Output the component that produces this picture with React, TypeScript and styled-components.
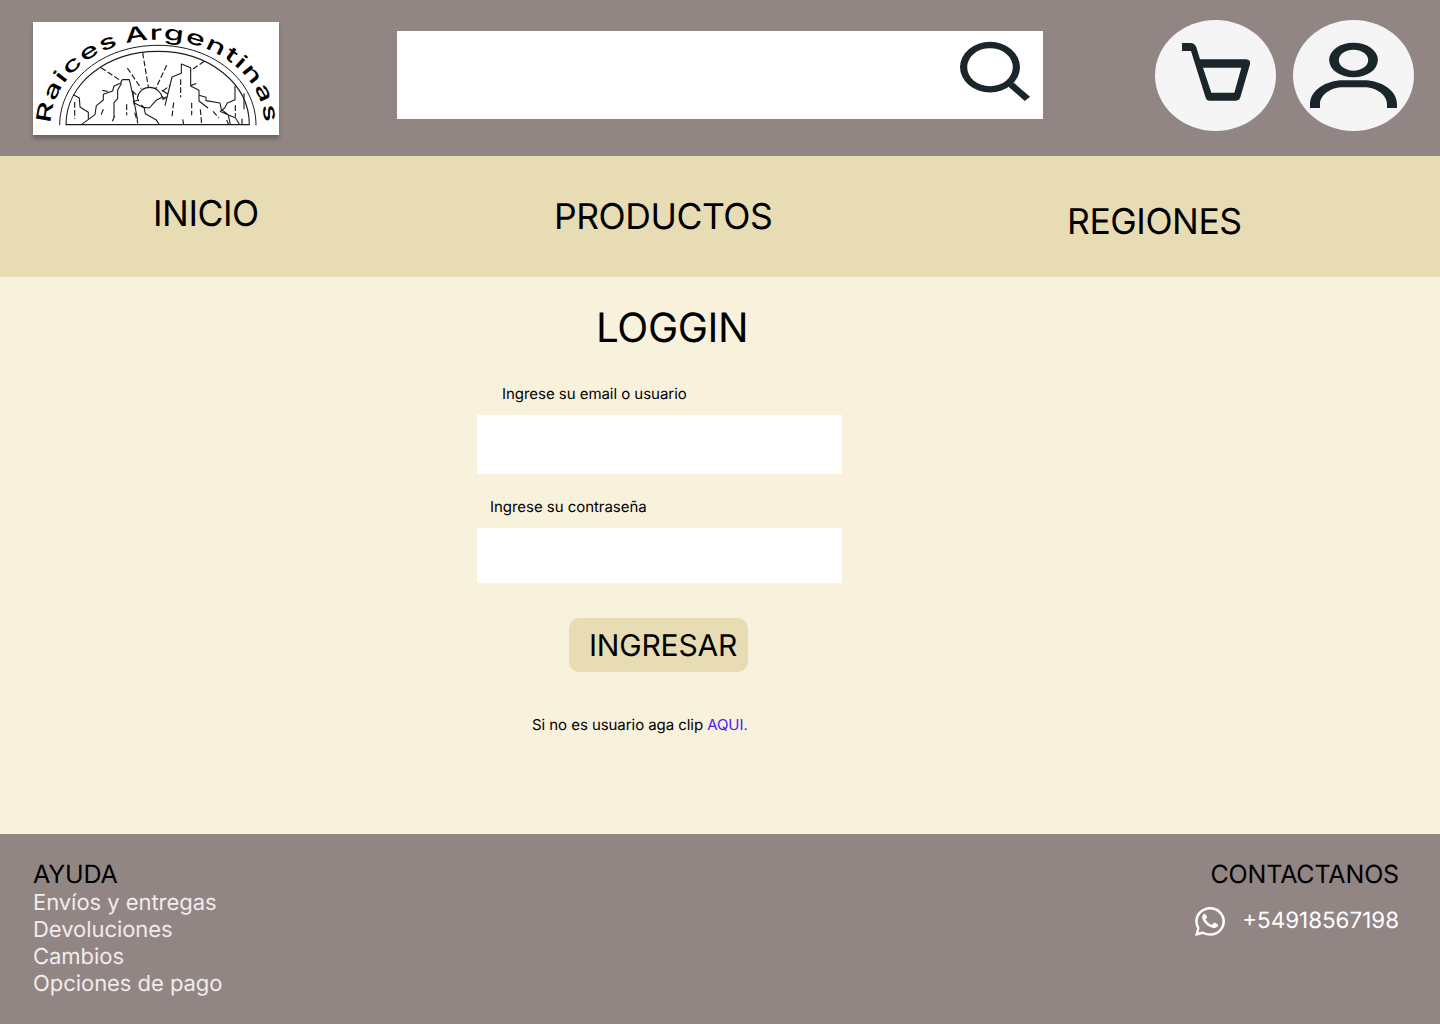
import React from "react";
import styled, { createGlobalStyle } from "styled-components";

const GlobalStyle = createGlobalStyle`
  *, *::before, *::after { box-sizing: border-box; }
  body { margin: 0; background: #f8f1dc; font-family: Inter, "Liberation Sans", sans-serif; text-rendering: geometricPrecision; color: #000; }
`;

const Page = styled.div`
  display: flex;
  flex-direction: column;
  width: 1440px;
  height: 1024px;
  overflow: hidden;
`;

const Header = styled.header`
  display: flex;
  align-items: flex-start;
  height: 156px;
  padding: 20px 26px 0 33px;
  background: #928685;
`;

const LogoCard = styled.a`
  display: block;
  width: 246px;
  height: 113px;
  margin-top: 2px;
  background: #fff;
  box-shadow: 0 4px 4px rgba(0, 0, 0, 0.25);
  svg { display: block; overflow: visible; }
`;

const SearchBar = styled.form`
  display: flex;
  width: 646px;
  height: 88px;
  margin: 11px 0 0 118px;
  background: #fff;
`;

const SearchInput = styled.input`
  flex: 1;
  min-width: 0;
  padding: 0 20px;
  border: 0;
  outline: 0;
  background: transparent;
  font: 400 28px Inter, sans-serif;
`;

const SearchButton = styled.button`
  width: 103px;
  padding: 0;
  border: 0;
  background: transparent;
  svg { display: block; }
`;

const Actions = styled.div`
  display: flex;
  gap: 17px;
  margin-left: auto;
`;

const RoundButton = styled.button`
  width: 121px;
  height: 111px;
  padding: 0;
  border: 0;
  border-radius: 50%;
  background: #f5f5f5;
  svg { display: block; }
`;

const Nav = styled.nav`
  display: flex;
  align-items: flex-start;
  height: 121px;
  background: #e8dcb4;
`;

const NavLink = styled.a<{ $left: number; $top: number; $width: number }>`
  width: ${(p) => p.$width}px;
  margin: ${(p) => p.$top}px 0 0 ${(p) => p.$left}px;
  font-size: 35.5px;
  letter-spacing: -0.45px;
  line-height: 42px;
  white-space: nowrap;
`;

const Main = styled.main`
  height: 557px;
  padding: 27px 0 0 477px;
  background: #f8f1dc;
`;

const LoginForm = styled.form`
  display: flex;
  flex-direction: column;
  align-items: flex-start;
  width: 365px;
`;

const Title = styled.h1`
  margin: 0 0 33px 119px;
  font-size: 40.5px;
  font-weight: 400;
  line-height: 48px;
  letter-spacing: -0.4px;
`;

const Label = styled.label<{ $indent: number }>`
  height: 18px;
  margin: 0 0 12px ${(p) => p.$indent}px;
  font-size: 15px;
  letter-spacing: -0.04px;
  line-height: 18px;
  white-space: nowrap;
`;

const Field = styled.input<{ $height: number; $after: number }>`
  width: 365px;
  height: ${(p) => p.$height}px;
  margin: 0 0 ${(p) => p.$after}px;
  padding: 0 16px;
  border: 0;
  border-radius: 0;
  background: #fff;
  font: 400 18px Inter, sans-serif;
`;

const Submit = styled.button`
  width: 179px;
  height: 54px;
  margin-left: 92px;
  padding: 2px 0 0 20px;
  border: 0;
  border-radius: 10px;
  background: #e8dcb4;
  color: #000;
  font: 400 30px/36px Inter, sans-serif;
  letter-spacing: -0.2px;
  text-align: left;
  text-rendering: geometricPrecision;
  white-space: nowrap;
`;

const Hint = styled.p`
  margin: 44px 0 0 55px;
  font-size: 15px;
  letter-spacing: -0.06px;
  line-height: 18px;
  white-space: nowrap;
`;

const HintLink = styled.a`
  color: #4a22f4;
`;

const Footer = styled.footer`
  display: flex;
  justify-content: space-between;
  height: 190px;
  padding: 25px 41px 0 33px;
  background: #928685;
`;

const FooterColumn = styled.section<{ $end?: boolean }>`
  display: flex;
  flex-direction: column;
  align-items: ${(p) => (p.$end ? "flex-end" : "flex-start")};
`;

const FooterTitle = styled.h2`
  margin: 0 0 -1px;
  font-size: 25px;
  font-weight: 400;
  letter-spacing: -0.15px;
  line-height: 32px;
`;

const FooterLink = styled.a`
  color: #f0ecec;
  font-size: 22px;
  letter-spacing: -0.05px;
  line-height: 27px;
`;

const Phone = styled.a`
  display: flex;
  align-items: center;
  gap: 17px;
  margin-top: 16px;
  color: #fff;
  font-size: 22.4px;
  line-height: 30px;
`;

const Logo = () => (
  <svg width="246" height="113" viewBox="0 0 738 339" fill="none" stroke="#1c1c1c" strokeWidth="3.300" strokeLinejoin="round">
    <defs>
      <path id="logo-arc" d="M54 306A320 253 0 0 1 694 306V325" />
    </defs>
    <text fontFamily="Inter, sans-serif" fontSize="61" fontWeight="500" letterSpacing="3" wordSpacing="-7" fill="#000" stroke="none">
      <textPath href="#logo-arc" startOffset="1" textLength="902" lengthAdjust="spacingAndGlyphs">Raices Argentinas</textPath>
    </text>
    <path d="M80 310C80 176 208 70 375 70S669 176 669 310" strokeWidth="3" />
    <path d="M99 308C99 186 220 88 375 88S649 186 649 308Z" />
    <path d="M121 218L139 228L141 255L166 271V290M145 308L186 278L190 251L211 234V217L239 207L243 192L262 184L268 173H289L299 216L314 296" />
    <path d="M243 285V242L254 230V204L266 184M297 207L310 218M300 239L316 234M304 243L333 257M313 229C315 210 331 196 350 196S384 209 389 229M313 229L318 238M391 224L372 233L363 242L349 258L333 256L325 249M333 256L337 275L369 293L379 308" />
    <path d="M300 208L303 248M386 205L403 215M389 229L402 224M387 232L398 230M396 251L417 165L445 154V126L473 137V192L498 205V220L519 226V236L561 243L565 262L586 279L592 308M498 205V237L525 258M561 268L575 258L583 243L606 233V192M561 268L586 279L607 287L620 308" />
    <path d="M633 214V262" />
    <g strokeDasharray="17 7" strokeWidth="3.500">
      <path d="M329 92L346 195M204 137L266 178M283 138L325 200M401 130L368 200M514 118L472 146M208 205L232 210M389 207L412 190M474 190L495 183" />
      <path d="M125 240V290M211 262L203 282M245 282L236 302M281 247V280M305 272L315 304M443 172V226M422 242L417 285M476 242V280M449 292L452 308M502 262L506 308M540 268L558 288M581 294L587 308M607 250V284M627 290V308" />
    </g>
  </svg>
);

const SearchIcon = () => (
  <svg width="103" height="88" viewBox="940 31 103 88" fill="#1b262b">
    <path fillRule="evenodd" d="M960 67.100a30 25.300 0 1 0 60 0a30 25.300 0 1 0 -60 0ZM967.200 67.200a22.800 19 0 1 0 45.600 0a22.800 19 0 1 0 -45.600 0Z" />
    <path d="M1008.500 86.800L1013.500 82.500L1030 96.700L1024.800 101Z" />
  </svg>
);

const CartIcon = () => (
  <svg width="121" height="111" viewBox="30 30 363 333" fill="#1b262b">
    <path fillRule="evenodd" d="M111 99H136Q149 99 154 112L165 148H303Q318 149 315 163L286 262Q283 272 273 272H194Q185 272 182 263L138 123H111ZM174 173L199 248H268L289 173Z" />
  </svg>
);

const UserIcon = () => (
  <svg width="121" height="111" viewBox="444 30 363 333" fill="#1b262b">
    <path fillRule="evenodd" d="M552.500 150a73 52 0 1 0 146 0a73 52 0 1 0 -146 0ZM581.500 150.500a44 31.500 0 1 0 88 0a44 31.500 0 1 0 -88 0Z" />
    <path d="M495 294V283C495 243 540 211 595 211H656C711 211 756 243 756 283V294H726V283C726 255 695 232 656 232H595C556 232 525 255 525 283V294Z" />
  </svg>
);

const WhatsAppIcon = () => (
  <svg width="30" height="29" viewBox="0 0 24 24" fill="#fff" preserveAspectRatio="none">
    <path d="M.057 24l1.687-6.163A11.867 11.867 0 0 1 .157 11.892C.16 5.335 5.495 0 12.050 0a11.817 11.817 0 0 1 8.413 3.488 11.824 11.824 0 0 1 3.480 8.414c-.003 6.557-5.338 11.892-11.893 11.892a11.900 11.900 0 0 1-5.688-1.448L.057 24zm6.597-3.807c1.676.995 3.276 1.591 5.392 1.592 5.448 0 9.886-4.434 9.889-9.885.002-5.462-4.415-9.890-9.881-9.892-5.452 0-9.887 4.434-9.889 9.884a9.860 9.860 0 0 0 1.510 5.260l-.999 3.648 3.978-.607z" />
    <path d="M8.200 6.100c-.4-.6-1-.5-1.500 0C5.300 7.500 5.600 9.500 6.500 11.100c1.900 3.200 4.700 5.500 8.300 6.300 1.500.3 3.400-.6 3.700-2 .1-.5 0-.9-.5-1.200l-2.200-1.100c-.5-.2-.8-.1-1.100.3l-.8 1c-.3.3-.6.3-1 .1-1.900-.8-3.300-2.100-4.300-3.900-.2-.4-.1-.6.200-.9l.7-.9c.2-.3.2-.6.1-.9z" />
  </svg>
);

const footerLinks = ["Envíos y entregas", "Devoluciones", "Cambios", "Opciones de pago"];

export default function App() {
  return (
    <>
      <GlobalStyle />
      <Page>
        <Header>
          <LogoCard><Logo /></LogoCard>
          <SearchBar>
            <SearchInput />
            <SearchButton type="button"><SearchIcon /></SearchButton>
          </SearchBar>
          <Actions>
            <RoundButton><CartIcon /></RoundButton>
            <RoundButton><UserIcon /></RoundButton>
          </Actions>
        </Header>
        <Nav>
          <NavLink $left={153} $top={37} $width={110}>INICIO</NavLink>
          <NavLink $left={291} $top={40} $width={222}>PRODUCTOS</NavLink>
          <NavLink $left={291} $top={45} $width={180}>REGIONES</NavLink>
        </Nav>
        <Main>
          <LoginForm>
            <Title>LOGGIN</Title>
            <Label $indent={25}>Ingrese su email o usuario</Label>
            <Field $height={59} $after={24} />
            <Label $indent={13}>Ingrese su contraseña</Label>
            <Field $height={55} $after={35} type="password" />
            <Submit type="button">INGRESAR</Submit>
            <Hint>Si no es usuario aga clip <HintLink>AQUI.</HintLink></Hint>
          </LoginForm>
        </Main>
        <Footer>
          <FooterColumn>
            <FooterTitle>AYUDA</FooterTitle>
            {footerLinks.map((text) => <FooterLink key={text}>{text}</FooterLink>)}
          </FooterColumn>
          <FooterColumn $end>
            <FooterTitle>CONTACTANOS</FooterTitle>
            <Phone><WhatsAppIcon />+54918567198</Phone>
          </FooterColumn>
        </Footer>
      </Page>
    </>
  );
}
